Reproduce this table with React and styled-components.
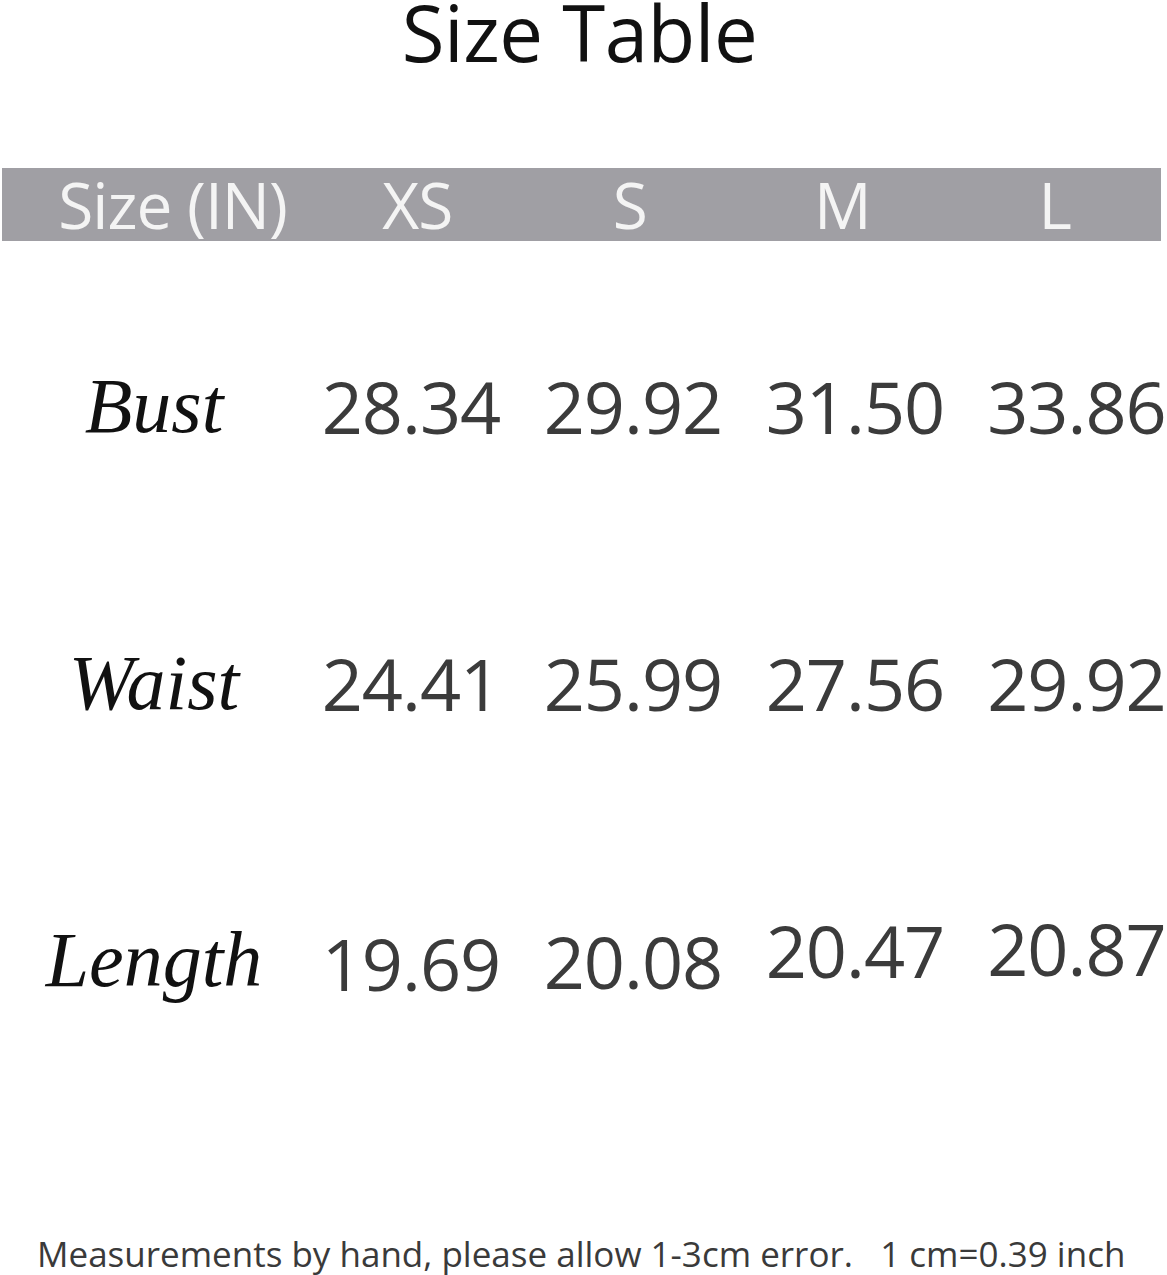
import React from "react";
import styled, { createGlobalStyle } from "styled-components";

const GlobalStyle = createGlobalStyle`
  body {
    margin: 0;
    background: #fff;
  }
`;

const columns = ["XS", "S", "M", "L"];

const rows = [
  { label: "Bust", values: ["28.34", "29.92", "31.50", "33.86"] },
  { label: "Waist", values: ["24.41", "25.99", "27.56", "29.92"] },
  { label: "Length", values: ["19.69", "20.08", "20.47", "20.87"], drop: [3, 1, -10, -12] },
];

export default function App() {
  return (
    <Page>
      <GlobalStyle />
      <Title>Size Table</Title>
      <HeaderBar>
        <HeadCell>Size (IN)</HeadCell>
        {columns.map((c) => (
          <HeadCell key={c}>{c}</HeadCell>
        ))}
      </HeaderBar>
      <Body>
        {rows.map((r) => (
          <Row key={r.label}>
            <Label>{r.label}</Label>
            {r.values.map((v, i) => (
              <Value key={i} $drop={r.drop ? r.drop[i] : 0}>
                {v}
              </Value>
            ))}
          </Row>
        ))}
      </Body>
      <Note>Measurements by hand, please allow 1-3cm error.&nbsp;&nbsp; 1 cm=0.39 inch</Note>
    </Page>
  );
}

const Page = styled.div`
  width: 1167px;
  height: 1275px;
  overflow: hidden;
  font-family: "Open Sans", "Noto Sans", sans-serif;
  display: flex;
  flex-direction: column;
`;

const Title = styled.h1`
  margin: 0;
  height: 168px;
  font-size: 78px;
  font-weight: 400;
  line-height: 64px;
  text-align: center;
  color: #111;
  letter-spacing: -0.5px;
  box-sizing: border-box;
  padding-right: 8px;
`;

const HeaderBar = styled.div`
  display: grid;
  grid-template-columns: 309px repeat(4, 1fr);
  margin-left: 2px;
  width: 1159px;
  height: 73px;
  background: #a09fa4;
  align-items: center;
`;

const HeadCell = styled.div`
  color: #f4f4f4;
  font-size: 64px;
  line-height: 73px;
  text-align: center;
  letter-spacing: -1px;
  white-space: nowrap;
  &:first-child {
    padding-left: 32px;
  }
`;

const Body = styled.div`
  padding-top: 26px;
`;

const Row = styled.div`
  display: grid;
  grid-template-columns: 300px 222px 222px 222px 1fr;
  height: 277px;
  align-items: center;
`;

const Label = styled.div`
  font-family: "Liberation Serif", "DejaVu Serif", serif;
  font-style: italic;
  font-size: 78px;
  color: #111;
  text-align: center;
  padding-left: 8px;
`;

const Value = styled.div`
  font-size: 72px;
  color: #3b3b3b;
  text-align: center;
  letter-spacing: -1px;
  white-space: nowrap;
  position: relative;
  top: ${(p) => p.$drop}px;
  &:last-child {
    padding-left: 20px;
  }
`;

const Note = styled.div`
  margin-top: auto;
  padding: 0 0 0 37px;
  height: 42px;
  font-size: 35px;
  line-height: 42px;
  color: #3a3a3a;
  white-space: nowrap;
`;
